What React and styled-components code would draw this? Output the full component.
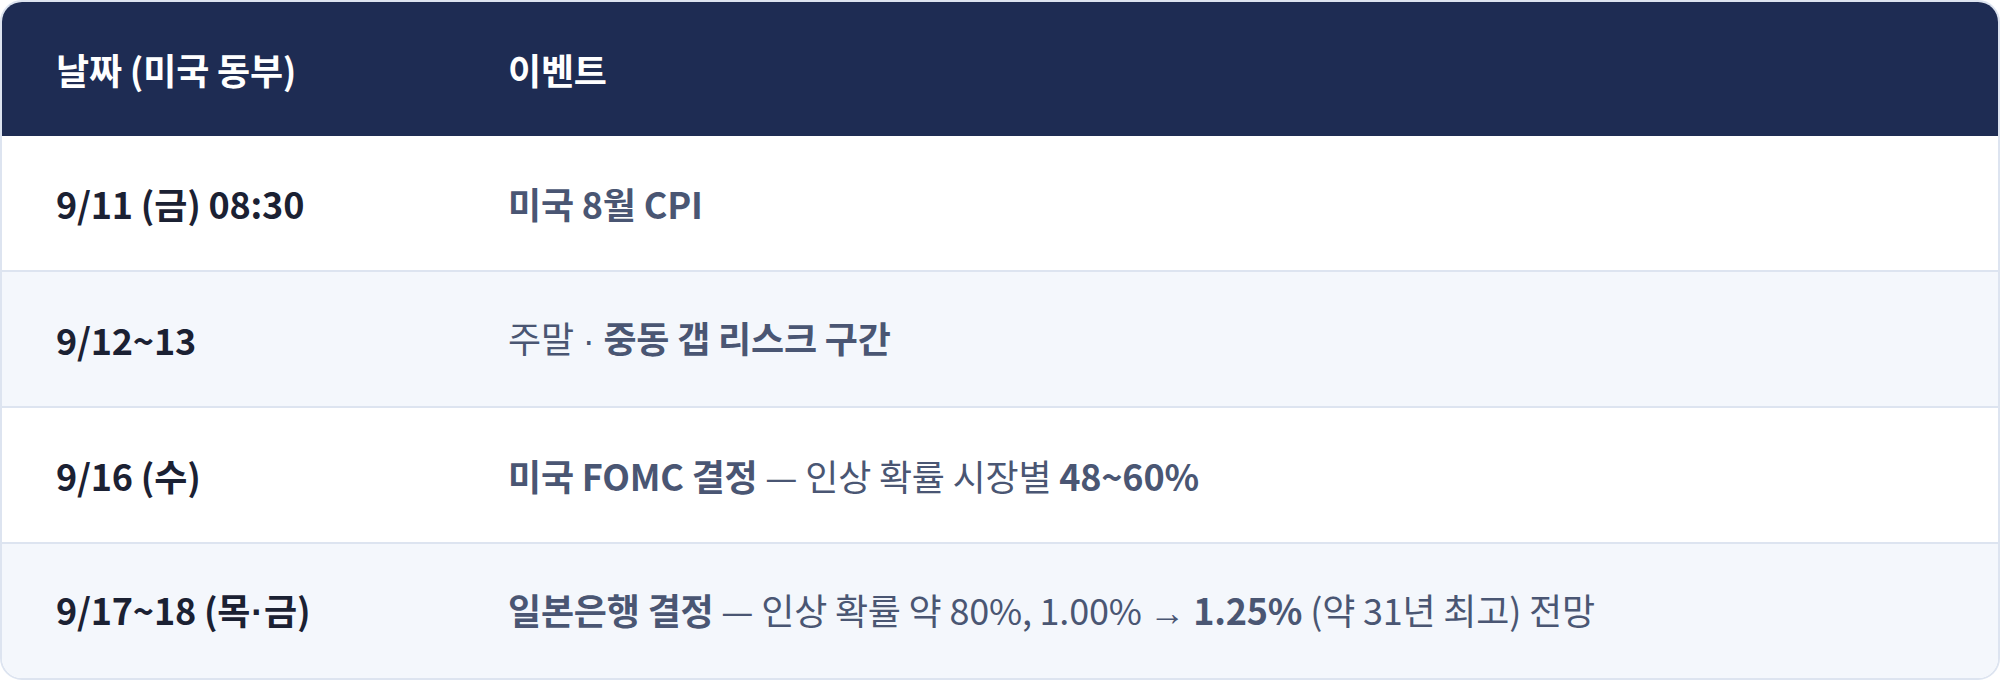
import React from "react";
import styled, { createGlobalStyle } from "styled-components";

const Global = createGlobalStyle`
  html, body { margin: 0; padding: 0; background: #ffffff; }
  body { font-family: "Noto Sans CJK KR", "Noto Sans", sans-serif; }
`;

const Table = styled.div`
  box-sizing: border-box;
  width: 2000px;
  height: 680px;
  border: 2px solid #dde4f0;
  border-radius: 22px;
  overflow: hidden;
  display: flex;
  flex-direction: column;
`;

const Row = styled.div`
  display: grid;
  grid-template-columns: 452px 1fr;
  align-items: center;
  flex: 1 1 0;
  background: ${(p) => (p.$head ? "#1e2c53" : p.$alt ? "#f4f7fc" : "#ffffff")};
  border-bottom: ${(p) => (p.$last ? "none" : p.$head ? "none" : "2px solid #dde4f0")};
`;

const Cell = styled.div`
  padding: 0 54px;
  font-size: 36px;
  line-height: 1.3;
  white-space: nowrap;
  letter-spacing: -0.2px;
`;

const HeadCell = styled(Cell)`
  color: #ffffff;
  font-weight: 700;
`;

const DateCell = styled(Cell)`
  color: #1b2133;
  font-weight: 700;
`;

const EventCell = styled(Cell)`
  color: #4a5673;
  font-weight: 400;
`;

const B = styled.strong`
  font-weight: 700;
`;

const Dot = styled.span`
  font-family: "Liberation Sans", "Noto Sans", sans-serif;
  margin: 0 1px;
`;

const Arrow = styled.span`
  font-family: "Liberation Sans", "Noto Sans", sans-serif;
  font-size: 36px;
`;

const rows = [
  { date: "9/11 (금) 08:30", event: <><B>미국 8월 CPI</B></> },
  { date: "9/12~13", event: <>주말 <Dot>·</Dot> <B>중동 갭 리스크 구간</B></> },
  { date: "9/16 (수)", event: <><B>미국 FOMC 결정</B> — 인상 확률 시장별 <B>48~60%</B></> },
  {
    date: <>9/17~18 (목<Dot>·</Dot>금)</>,
    event: (
      <>
        <B>일본은행 결정</B> — 인상 확률 약 80%, 1.00% <Arrow>→</Arrow> <B>1.25%</B> (약 31년 최고) 전망
      </>
    ),
  },
];

export default function App() {
  return (
    <>
      <Global />
      <Table>
        <Row $head>
          <HeadCell>날짜 (미국 동부)</HeadCell>
          <HeadCell>이벤트</HeadCell>
        </Row>
        {rows.map((r, i) => (
          <Row key={i} $alt={i % 2 === 1} $last={i === rows.length - 1}>
            <DateCell>{r.date}</DateCell>
            <EventCell>{r.event}</EventCell>
          </Row>
        ))}
      </Table>
    </>
  );
}
